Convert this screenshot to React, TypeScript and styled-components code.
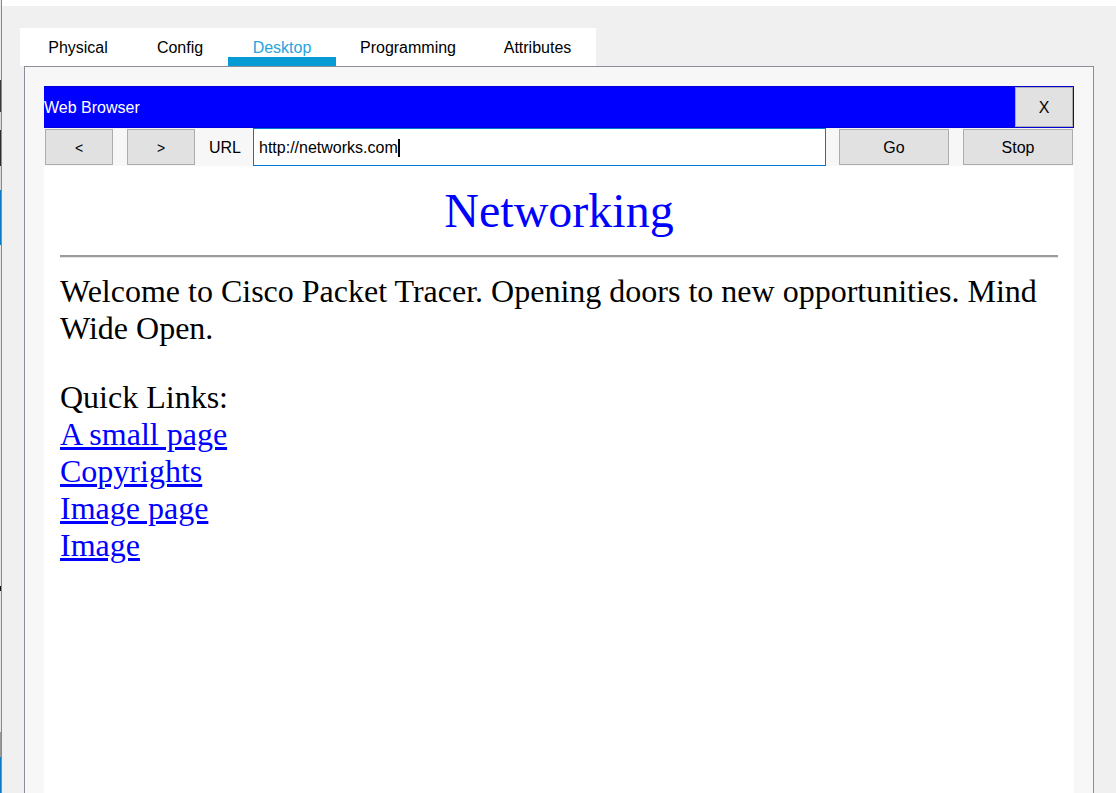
import React from "react";
import styled, { createGlobalStyle } from "styled-components";

const GlobalStyle = createGlobalStyle`
  html, body {
    margin: 0;
    padding: 0;
    height: 100%;
    overflow: hidden;
    background: #f0f0f0;
  }
  #root {
    height: 100%;
  }
`;

const tabs = [
  { label: "Physical", width: 108 },
  { label: "Config", width: 96 },
  { label: "Desktop", width: 108 },
  { label: "Programming", width: 144 },
  { label: "Attributes", width: 115 },
];
const links = ["A small page", "Copyrights", "Image page", "Image"];

const App = () => {
  return (
    <Screen>
      <GlobalStyle />
      <EdgeStrip />
      <Main>
        <TopStrip />
        <Workspace>
          <TabBar>
            {tabs.map((t) => (
              <Tab key={t.label} $width={t.width} $active={t.label === "Desktop"}>
                {t.label}
              </Tab>
            ))}
          </TabBar>
          <Panel>
            <Browser>
              <TitleBar>
                <Title>Web Browser</Title>
                <CloseButton>X</CloseButton>
              </TitleBar>
              <Toolbar>
                <NavButton>&lt;</NavButton>
                <NavButton>&gt;</NavButton>
                <UrlLabel>URL</UrlLabel>
                <UrlField>
                  http://networks.com
                  <Caret />
                </UrlField>
                <ActionButton>Go</ActionButton>
                <ActionButton>Stop</ActionButton>
              </Toolbar>
              <Page>
                <Heading>Networking</Heading>
                <Rule />
                <Para>
                  Welcome to Cisco Packet Tracer. Opening doors to new
                  opportunities. Mind Wide Open.
                </Para>
                <Para>
                  Quick Links:
                  {links.map((l) => (
                    <React.Fragment key={l}>
                      <br />
                      <Link href="#">{l}</Link>
                    </React.Fragment>
                  ))}
                </Para>
              </Page>
            </Browser>
          </Panel>
        </Workspace>
      </Main>
    </Screen>
  );
};

export default App;

const Screen = styled.div`
  display: flex;
  height: 100vh;
  overflow: hidden;
`;
const EdgeStrip = styled.div`
  width: 1px;
  flex-shrink: 0;
  border-right: 1px solid #8a8a8a;
  background: linear-gradient(
    to bottom,
    #e8e8e8 0px,
    #e8e8e8 80px,
    #3a3a3a 80px,
    #3a3a3a 112px,
    #d8d8d8 112px,
    #d8d8d8 130px,
    #2e2e2e 130px,
    #2e2e2e 166px,
    #d8d8d8 166px,
    #d8d8d8 190px,
    #0a7cc4 190px,
    #0a7cc4 245px,
    #e4e4e4 245px,
    #e4e4e4 586px,
    #111 586px,
    #111 591px,
    #e4e4e4 591px,
    #e4e4e4 732px,
    #9a9a9a 732px,
    #9a9a9a 757px,
    #0a7cc4 757px
  );
`;
const Main = styled.div`
  flex: 1;
  display: flex;
  flex-direction: column;
  background: #f0f0f0;
  min-width: 0;
`;
const TopStrip = styled.div`
  height: 6px;
  background: #ffffff;
  flex-shrink: 0;
`;
const Workspace = styled.div`
  flex: 1;
  display: flex;
  flex-direction: column;
  padding: 22px 22px 0 18px;
  min-height: 0;
`;
const TabBar = styled.div`
  align-self: flex-start;
  display: flex;
  background: #ffffff;
  padding-left: 4px;
  padding-right: 1px;
  height: 38px;
`;
const Tab = styled.div<{ $active?: boolean; $width: number }>`
  width: ${(p) => p.$width}px;
  text-align: center;
  font-family: "Liberation Sans", Arial, sans-serif;
  font-size: 16px;
  height: 29px;
  line-height: 39px;
  color: ${(p) => (p.$active ? "#28a3dc" : "#000000")};
  border-bottom: 9px solid ${(p) => (p.$active ? "#079bd6" : "transparent")};
  box-sizing: content-box;
`;
const Panel = styled.div`
  flex: 1;
  margin-left: 4px;
  border: 1px solid #8a8e99;
  border-bottom: none;
  background: #f7f7f7;
  padding: 19px 19px 0 19px;
  display: flex;
  flex-direction: column;
  min-height: 0;
`;
const Browser = styled.div`
  flex: 1;
  display: flex;
  flex-direction: column;
  background: #ffffff;
`;
const TitleBar = styled.div`
  height: 42px;
  box-sizing: border-box;
  background: #0000ff;
  border: 1px solid #0000d8;
  border-left: none;
  display: flex;
  align-items: stretch;
  justify-content: space-between;
`;
const Title = styled.div`
  color: #ffffff;
  font-family: "Liberation Sans", Arial, sans-serif;
  font-size: 16px;
  display: flex;
  align-items: center;
  padding-top: 2px;
`;
const ButtonBase = styled.div`
  box-sizing: border-box;
  background: #e1e1e1;
  border: 1px solid #adadad;
  font-family: "Liberation Sans", Arial, sans-serif;
  font-size: 16px;
  color: #000000;
  display: flex;
  align-items: center;
  justify-content: center;
  padding-top: 2px;
`;
const CloseButton = styled(ButtonBase)`
  width: 58px;
`;
const Toolbar = styled.div`
  height: 38px;
  background: #f7f7f7;
  display: flex;
  align-items: center;
  padding: 0 1px;
`;
const NavButton = styled(ButtonBase)`
  width: 68px;
  height: 36px;
  margin-right: 14px;
  font-size: 14px;
`;
const UrlLabel = styled.div`
  font-family: "Liberation Sans", Arial, sans-serif;
  font-size: 16px;
  color: #000000;
  margin-right: 12px;
  padding-top: 2px;
`;
const UrlField = styled.div`
  flex: 1;
  height: 38px;
  box-sizing: border-box;
  border: 1px solid #0078d7;
  background: #ffffff;
  padding: 2px 0 0 5px;
  display: flex;
  align-items: center;
  font-family: "Liberation Sans", Arial, sans-serif;
  font-size: 16px;
  color: #000000;
  margin-right: 13px;
`;
const Caret = styled.span`
  display: inline-block;
  width: 2px;
  height: 18px;
  background: #000000;
`;
const ActionButton = styled(ButtonBase)`
  width: 110px;
  height: 36px;
  & + & {
    margin-left: 14px;
  }
`;
const Page = styled.div`
  flex: 1;
  padding: 17px 16px 0 16px;
  font-family: "Liberation Serif", "Times New Roman", serif;
  color: #000000;
`;
const Heading = styled.h1`
  margin: 0;
  text-align: center;
  font-size: 48px;
  font-weight: normal;
  color: #0000ff;
`;
const Rule = styled.hr`
  margin: 17px 0 0 0;
  height: 0;
  border: none;
  border-top: 2px solid #9b9b9b;
  border-bottom: 1px solid #e4e4e4;
`;
const Para = styled.p`
  margin: 15px 0 32px 0;
  font-size: 32px;
  & + & {
    margin-top: 0;
  }
`;
const Link = styled.a`
  color: #0000ff;
  text-decoration: underline;
`;
